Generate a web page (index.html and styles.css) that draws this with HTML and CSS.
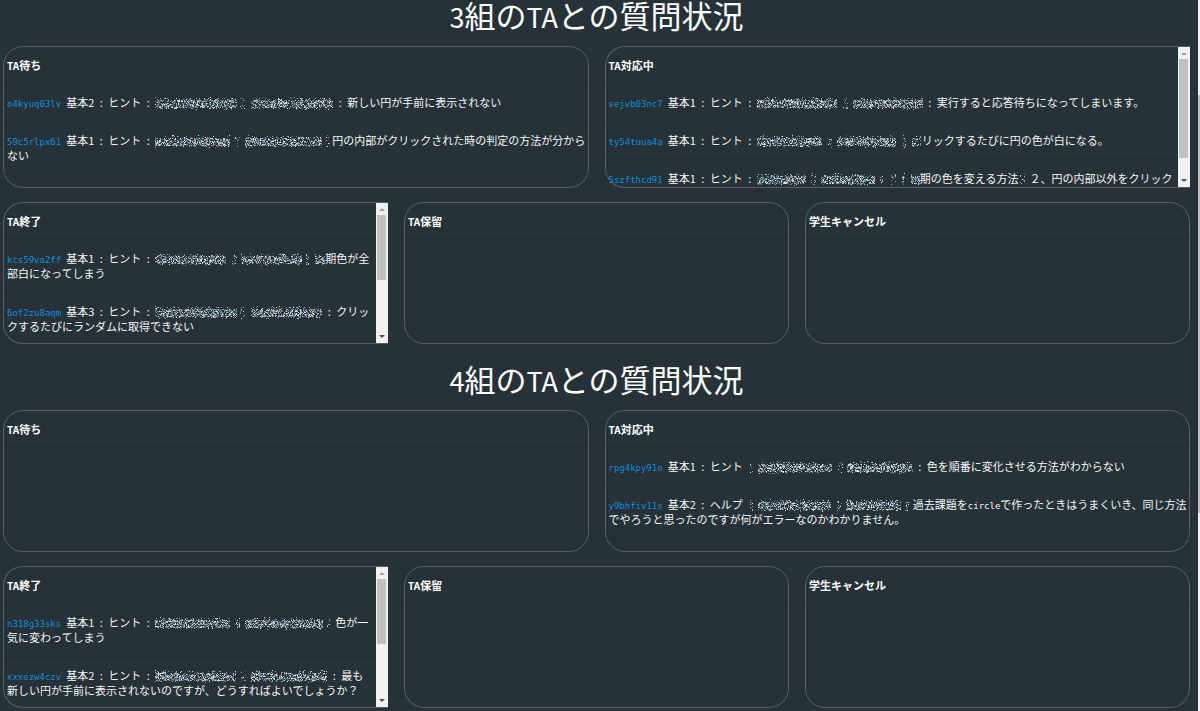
FILE: index.html
```html
<!DOCTYPE html>
<html lang="ja">
<head>
<meta charset="utf-8">
<title>TAとの質問状況</title>
<link rel="stylesheet" href="styles.css">
</head>
<body>
<main class="page">
  <section class="group">
    <h1 class="title"><span class="title-latin">3</span>組の<span class="title-latin">TA</span>との質問状況</h1>
    <div class="cards cards-two">
      <article class="card">
        <div class="content">
          <h2 class="card-title"><span class="card-latin">TA</span>待ち</h2>
          <ul class="list">
            <li class="row"><a class="id" href="#">o4kyuq03lv</a>基本2<span class="sep">:</span>ヒント<span class="sep">:</span><svg class="noise" width="178" data-runs="0-82 85-90 96-178"></svg><span class="sep">:</span>新しい円が手前に表示されない</li>
            <li class="row"><a class="id" href="#">59c5rlpx61</a>基本1<span class="sep">:</span>ヒント<span class="sep">:</span><svg class="noise" width="177" data-runs="0-75 80-85 90-167 171-175"></svg>円の内部がクリックされた時の判定の方法が分からない</li>
          </ul>
        </div>
      </article>
      <article class="card card-scroll">
        <div class="content">
          <h2 class="card-title"><span class="card-latin">TA</span>対応中</h2>
          <ul class="list">
            <li class="row"><a class="id" href="#">sejvb03nc7</a>基本1<span class="sep">:</span>ヒント<span class="sep">:</span><svg class="noise" width="166" data-runs="0-80 86-91 96-166"></svg><span class="sep">:</span>実行すると応答待ちになってしまいます。</li>
            <li class="row"><a class="id" href="#">ty54tuua4a</a>基本1<span class="sep">:</span>ヒント<span class="sep">:</span><svg class="noise" width="165" data-runs="0-65 70-75 80-139 146-149 155-164"></svg>リックするたびに円の色が白になる。</li>
            <li class="row"><a class="id" href="#">5szfthcd91</a>基本1<span class="sep">:</span>ヒント<span class="sep">:</span><svg class="noise" width="163" data-runs="0-49 54-59 64-118 123-126 134-139 145-148 154-163"></svg>期の色を変える方法<svg class="noise" width="11" data-runs="2-8"></svg>２、円の内部以外をクリック</li>
          </ul>
        </div>
        <div class="bar" aria-hidden="true">
          <svg class="arrow" viewBox="0 0 12 12"><path class="arrow-off" d="M6 5 9 8H3Z"/></svg>
          <div class="track"><div class="thumb thumb-long"></div></div>
          <svg class="arrow" viewBox="0 0 12 12"><path class="arrow-on" d="M3 4H9L6 7Z"/></svg>
        </div>
      </article>
    </div>
    <div class="cards cards-three">
      <article class="card card-scroll">
        <div class="content">
          <h2 class="card-title"><span class="card-latin">TA</span>終了</h2>
          <ul class="list">
            <li class="row"><a class="id" href="#">kcs59va2ff</a>基本1<span class="sep">:</span>ヒント<span class="sep">:</span><svg class="noise" width="170" data-runs="0-71 77-82 86-147 151-154 160-170"></svg>期色が全部白になってしまう</li>
            <li class="row"><a class="id" href="#">6of2zu8aqm</a>基本3<span class="sep">:</span>ヒント<span class="sep">:</span><svg class="noise" width="167" data-runs="0-82 85-90 96-167"></svg><span class="sep">:</span>クリックするたびにランダムに取得できない</li>
          </ul>
        </div>
        <div class="bar" aria-hidden="true">
          <svg class="arrow" viewBox="0 0 12 12"><path class="arrow-off" d="M6 5 9 8H3Z"/></svg>
          <div class="track"><div class="thumb"></div></div>
          <svg class="arrow" viewBox="0 0 12 12"><path class="arrow-on" d="M3 4H9L6 7Z"/></svg>
        </div>
      </article>
      <article class="card"><div class="content"><h2 class="card-title"><span class="card-latin">TA</span>保留</h2></div></article>
      <article class="card"><div class="content"><h2 class="card-title">学生キャンセル</h2></div></article>
    </div>
  </section>
  <section class="group">
    <h1 class="title"><span class="title-latin">4</span>組の<span class="title-latin">TA</span>との質問状況</h1>
    <div class="cards cards-two">
      <article class="card"><div class="content"><h2 class="card-title"><span class="card-latin">TA</span>待ち</h2></div></article>
      <article class="card">
        <div class="content">
          <h2 class="card-title"><span class="card-latin">TA</span>対応中</h2>
          <ul class="list">
            <li class="row"><a class="id" href="#">rpg4kpy91o</a>基本1<span class="sep">:</span>ヒント<svg class="noise" width="170" data-runs="7-10 15-89 95-100 104-170"></svg><span class="sep">:</span>色を順番に変化させる方法がわからない</li>
            <li class="row"><a class="id" href="#">y9bhfiv11s</a>基本2<span class="sep">:</span>ヘルプ<svg class="noise" width="170" data-runs="7-10 15-88 94-99 103-158 162-166"></svg>過去課題を<span class="latin">circle</span>で作ったときはうまくいき、同じ方法でやろうと思ったのですが何がエラーなのかわかりません。</li>
          </ul>
        </div>
      </article>
    </div>
    <div class="cards cards-three">
      <article class="card card-scroll">
        <div class="content">
          <h2 class="card-title"><span class="card-latin">TA</span>終了</h2>
          <ul class="list">
            <li class="row"><a class="id" href="#">n318g33sks</a>基本1<span class="sep">:</span>ヒント<span class="sep">:</span><svg class="noise" width="180" data-runs="0-75 80-85 90-168 172-175"></svg>色が一気に変わってしまう</li>
            <li class="row"><a class="id" href="#">xxxezw4czv</a>基本2<span class="sep">:</span>ヒント<span class="sep">:</span><svg class="noise" width="172" data-runs="0-81 86-91 96-172"></svg><span class="sep">:</span>最も新しい円が手前に表示されないのですが、どうすればよいでしょうか？</li>
          </ul>
        </div>
        <div class="bar" aria-hidden="true">
          <svg class="arrow" viewBox="0 0 12 12"><path class="arrow-off" d="M6 5 9 8H3Z"/></svg>
          <div class="track"><div class="thumb"></div></div>
          <svg class="arrow" viewBox="0 0 12 12"><path class="arrow-on" d="M3 4H9L6 7Z"/></svg>
        </div>
      </article>
      <article class="card"><div class="content"><h2 class="card-title"><span class="card-latin">TA</span>保留</h2></div></article>
      <article class="card"><div class="content"><h2 class="card-title">学生キャンセル</h2></div></article>
    </div>
  </section>
</main>
<div class="page-bar" aria-hidden="true"><div class="page-thumb"></div></div>
<script src="noise.js"></script>
</body>
</html>
```

FILE: styles.css
```css
* { box-sizing: border-box; }

body {
  margin: 0;
  min-height: 100vh;
  display: flex;
  background: #263238;
  color: #f4f6f6;
  font-family: "Noto Sans CJK JP", sans-serif;
  font-size: 11px;
  line-height: 15px;
}

.page {
  flex: 1;
  min-width: 0;
  padding: 0 8px 3px 3px;
}

.group + .group { margin-top: 20px; }

.title {
  margin: 0 0 16px;
  font-size: 31px;
  font-weight: 400;
  line-height: 30px;
  text-align: center;
  color: #fff;
}

.title-latin {
  font-size: 27px;
  line-height: 0;
}

.cards {
  display: grid;
  gap: 16px;
}

.cards-two { grid-template-columns: 1fr 1fr; }

.cards-three {
  grid-template-columns: 1fr 1fr 1fr;
  margin-top: 14px;
}

.card {
  display: flex;
  height: 142px;
  min-width: 0;
  border: 1px solid #566065;
  border-radius: 20px;
}

.card-scroll {
  border-right: 0;
  border-radius: 20px 0 0 20px;
}

.content {
  flex: 1;
  min-width: 0;
  overflow: hidden;
}

.card-title {
  margin: 0;
  padding: 11px 3px 10px;
  border-bottom: 1px solid #222d33;
  font-size: 11px;
  font-weight: 700;
  line-height: 15px;
  color: #fff;
}

.card-latin {
  font-size: 10px;
  line-height: 0;
}

.latin {
  font-family: "DejaVu Sans Mono", monospace;
  font-size: 9px;
  line-height: 0;
}

.list {
  margin: 0;
  padding: 0;
  list-style: none;
}

.row {
  padding: 11px 0 11px 3px;
  border-bottom: 1px solid #222d33;
  line-break: anywhere;
}

.card-scroll .row { padding-right: 3px; }

.id {
  margin-right: 5px;
  font-family: "DejaVu Sans Mono", monospace;
  font-size: 9px;
  line-height: 0;
  color: #0f8edb;
  text-decoration: none;
}

.sep {
  display: inline-block;
  width: 14px;
  text-align: center;
}

.noise {
  height: 13px;
  vertical-align: -3px;
}

.bar {
  display: flex;
  flex-direction: column;
  width: 12px;
  background: #f1f1f1;
}

.arrow {
  width: 12px;
  height: 12px;
}

.arrow-off { fill: #a3a3a3; }
.arrow-on { fill: #505050; }

.track {
  flex: 1;
  padding: 0 2px 0 1px;
}

.thumb {
  height: 56%;
  background: #c1c1c1;
}

.thumb-long { height: 85%; }

.page-bar {
  width: 2px;
  background: #f1f1f1;
}

.page-thumb {
  height: 418px;
  margin-top: 95px;
  background: #c1c1c1;
}
```

FILE: noise.js
```js
// Fills each .noise strip with speckle that hides a name.
const SVG_NS = "http://www.w3.org/2000/svg";
const COLORS = ["#cdd6da", "#94a4ae", "#6c8194", "#b09a80", "#44688a", "#e2e2dc", "#55646c", "#7f9db2"];
let seed = 7;

function random() {
  seed = (seed * 16807) % 2147483647;
  return seed / 2147483647;
}

document.querySelectorAll(".noise").forEach((svg) => {
  const paths = COLORS.map(() => "");
  svg.dataset.runs.split(" ").forEach((run) => {
    const [from, to] = run.split("-").map(Number);
    const small = to - from < 7;
    for (let x = from; x < to; x++) {
      for (let y = 0; y < 13; y++) {
        const core = y > 2 && y < 11;
        const chance = core ? (small ? 0.25 : 0.62) : y > 0 && y < 12 ? 0.2 : 0.04;
        if (random() < chance) {
          paths[Math.floor(random() * COLORS.length)] += `M${x} ${y}h1v1h-1z`;
        }
      }
    }
  });
  paths.forEach((d, i) => {
    const path = document.createElementNS(SVG_NS, "path");
    path.setAttribute("d", d);
    path.setAttribute("fill", COLORS[i]);
    svg.appendChild(path);
  });
});
```
